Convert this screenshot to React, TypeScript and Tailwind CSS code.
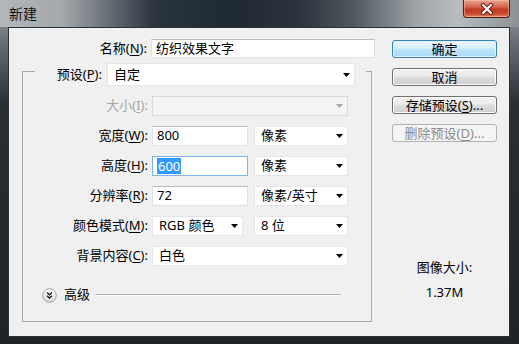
import React from 'react';
import clsx from 'clsx';

const Arrow: React.FC<{ disabled?: boolean }> = ({ disabled }) => (
  <svg width="7" height="4" viewBox="0 0 7 4" className="shrink-0">
    <path d="M0 0h7L3.5 4z" fill={disabled ? '#a8a8a8' : '#000'} />
  </svg>
);

const Combo: React.FC<{ className?: string; disabled?: boolean; children?: React.ReactNode }> = ({
  className,
  disabled,
  children,
}) => (
  <div
    className={clsx(
      'flex items-center justify-between border pl-[6px] pr-[4px]',
      disabled ? 'bg-[#f4f4f4] border-[#d9d9d9]' : 'bg-white border-[#e6e6e6]',
      className
    )}
  >
    <span className="whitespace-nowrap">{children}</span>
    <Arrow disabled={disabled} />
  </div>
);

const TextBox: React.FC<{ className?: string; focused?: boolean; children?: React.ReactNode }> = ({
  className,
  focused,
  children,
}) => (
  <div
    className={clsx(
      'flex items-center bg-white border pl-[4px]',
      focused
        ? 'border-[#7fb4e6]'
        : 'border-[#dfe2e6] border-t-[#b9bcc2]',
      className
    )}
  >
    {children}
  </div>
);

const Label: React.FC<{ className?: string; disabled?: boolean; children?: React.ReactNode }> = ({
  className,
  disabled,
  children,
}) => (
  <span className={clsx('text-right whitespace-nowrap', disabled ? 'text-[#a6a6a6]' : 'text-black', className)}>
    {children}
  </span>
);

const Key: React.FC<{ children: React.ReactNode }> = ({ children }) => (
  <span className="underline underline-offset-2">{children}</span>
);

const Button: React.FC<{ variant?: 'default' | 'normal' | 'disabled'; children: React.ReactNode }> = ({
  variant = 'normal',
  children,
}) => (
  <div
    className={clsx(
      'h-[18px] w-[105px] rounded-[3px] border flex items-center justify-center leading-none',
      variant === 'default' &&
        'border-[#3c7fb1] bg-[linear-gradient(180deg,#eaf6fd_0%,#d9f0fc_45%,#bee6fd_50%,#a7d9f5_100%)] shadow-[inset_0_0_0_1px_#e4f4fc] text-black',
      variant === 'normal' &&
        'border-[#707070] bg-[linear-gradient(180deg,#f2f2f2_0%,#ebebeb_45%,#dddddd_50%,#cfcfcf_100%)] shadow-[inset_0_0_0_1px_#fcfcfc] text-black',
      variant === 'disabled' && 'border-[#adb2b5] bg-[#f4f4f4] text-[#8a8a8a]'
    )}
  >
    {children}
  </div>
);

export default function App() {
  return (
    <div className="w-[519px] h-[344px] overflow-hidden flex flex-col font-['Noto_Sans','Noto_Sans_CJK_SC',sans-serif] text-[13px] bg-[linear-gradient(180deg,#9ba0a4_0%,#6a7076_12%,#2a2f34_30%,#1f2327_100%)]">
      {/* Title bar */}
      <div className="h-[27px] shrink-0 flex items-start bg-[linear-gradient(90deg,#b3b7ba_0%,#a3a8ab_12%,#5f676e_22%,#2a343e_30%,#1f2933_45%,#2c353e_58%,#4f575e_68%,#9da3a7_80%,#b8bdc0_88%,#8b9094_100%)]">
        <span className="pl-[9px] pt-[5px] text-[14px] leading-[18px] text-[#111] flex-1">新建</span>
        <div className="mr-[9px] w-[47px] h-[18px] rounded-b-[4px] border border-t-0 border-[#4d1c14] flex items-center justify-center bg-[linear-gradient(180deg,#e9a592_0%,#d4654c_40%,#c03a22_55%,#c64a2e_80%,#e0866a_100%)] shadow-[inset_0_0_0_1px_rgba(255,200,180,0.5)]">
          <svg width="14" height="12" viewBox="0 0 14 12">
            <path d="M3 2l8 8M11 2l-8 8" stroke="#5a1c10" strokeWidth="4" strokeLinecap="round" />
            <path d="M3 2l8 8M11 2l-8 8" stroke="#fff" strokeWidth="2.2" strokeLinecap="round" />
          </svg>
        </div>
      </div>

      {/* Client area */}
      <div className="ml-[8px] w-[502px] h-[310px] shrink-0 border border-[#2b3036] bg-[#f0f0f0] flex text-black">
        {/* Left column */}
        <div className="w-[371px] flex flex-col pt-[11px]">
          <div className="flex items-center h-[19px]">
            <Label className="w-[138px]">
              名称(<Key>N</Key>):
            </Label>
            <TextBox className="ml-[4px] w-[224px] h-[19px]">纺织效果文字</TextBox>
          </div>

          <fieldset className="-mt-[2px] ml-[13px] w-[350px] border border-[#a9a9a9] pb-[18px]">
            <legend className="ml-[12px] pt-[7px] pr-[11px] flex items-center">
              <Label className="w-[67px]">
                预设(<Key>P</Key>):
              </Label>
              <Combo className="ml-[5px] w-[248px] h-[23px] pr-[3px]">自定</Combo>
            </legend>

            <div className="mt-[10px] flex flex-col gap-[10px]">
              <div className="flex items-center h-[20px]">
                <Label className="w-[125px]" disabled>
                  大小(<Key>I</Key>):
                </Label>
                <Combo className="ml-[4px] w-[196px] h-[20px]" disabled />
              </div>
              <div className="flex items-center h-[20px]">
                <Label className="w-[125px]">
                  宽度(<Key>W</Key>):
                </Label>
                <TextBox className="ml-[4px] w-[96px] h-[20px]">800</TextBox>
                <Combo className="ml-[6px] w-[94px] h-[20px]">像素</Combo>
              </div>
              <div className="flex items-center h-[20px]">
                <Label className="w-[125px]">
                  高度(<Key>H</Key>):
                </Label>
                <TextBox className="ml-[4px] w-[96px] h-[20px]" focused>
                  <span className="bg-[#3399ff] text-white leading-[16px] px-[1px]">600</span>
                </TextBox>
                <Combo className="ml-[6px] w-[94px] h-[20px]">像素</Combo>
              </div>
              <div className="flex items-center h-[20px]">
                <Label className="w-[125px]">
                  分辨率(<Key>R</Key>):
                </Label>
                <TextBox className="ml-[4px] w-[96px] h-[20px]">72</TextBox>
                <Combo className="ml-[6px] w-[94px] h-[20px]">像素/英寸</Combo>
              </div>
              <div className="flex items-center h-[20px]">
                <Label className="w-[125px]">
                  颜色模式(<Key>M</Key>):
                </Label>
                <Combo className="ml-[4px] w-[91px] h-[20px]">RGB 颜色</Combo>
                <Combo className="ml-[11px] w-[94px] h-[20px]">8 位</Combo>
              </div>
              <div className="flex items-center h-[20px]">
                <Label className="w-[125px]">
                  背景内容(<Key>C</Key>):
                </Label>
                <Combo className="ml-[4px] w-[196px] h-[20px]">白色</Combo>
              </div>
            </div>

            <div className="mt-[21px] h-[16px] flex items-center pl-[19px] pr-[30px]">
              <svg width="15" height="15" viewBox="0 0 15 15" className="shrink-0">
                <defs>
                  <linearGradient id="adv" x1="0" y1="0" x2="0" y2="1">
                    <stop offset="0" stopColor="#ffffff" />
                    <stop offset="1" stopColor="#d9d9d9" />
                  </linearGradient>
                </defs>
                <circle cx="7.5" cy="7.5" r="6.8" fill="url(#adv)" stroke="#a3a3a3" />
                <path d="M5 4.5l2.5 2.3L10 4.5M5 7.8l2.5 2.3L10 7.8" fill="none" stroke="#1a1a1a" strokeWidth="1.3" />
              </svg>
              <span className="ml-[7px]">高级</span>
              <div className="ml-[5px] flex-1 h-[2px] border-t border-[#b3b3b3] border-b-white border-b" />
            </div>
          </fieldset>
        </div>

        {/* Right column */}
        <div className="flex flex-col pl-[12px] pt-[12px] w-[117px]">
          <div className="flex flex-col gap-[10px]">
            <Button variant="default">确定</Button>
            <Button>取消</Button>
            <Button>
              存储预设(<Key>S</Key>)...
            </Button>
            <Button variant="disabled">
              删除预设(<Key>D</Key>)...
            </Button>
          </div>
          <div className="w-[105px] mt-[116px] flex flex-col items-center leading-[18px]">
            <span>图像大小:</span>
            <span className="mt-[7px]">1.37M</span>
          </div>
        </div>
      </div>
    </div>
  );
}
